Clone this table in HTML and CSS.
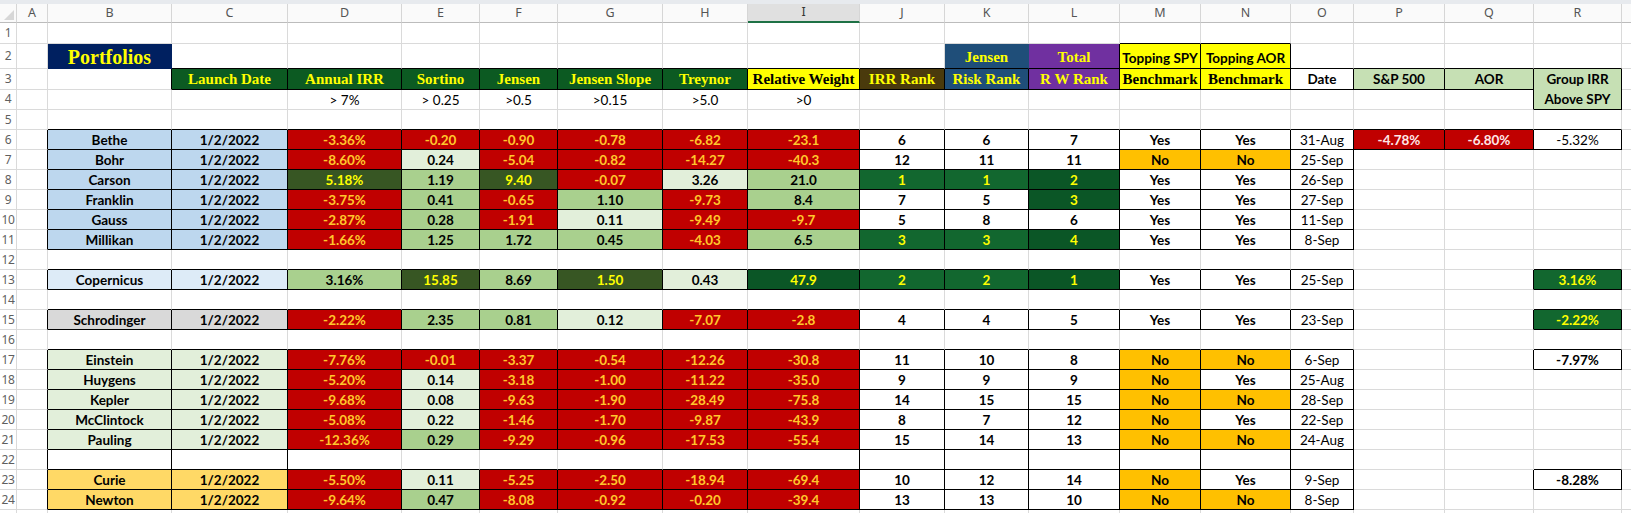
FILE: index.html
```html
<!DOCTYPE html>
<html>
<head>
<meta charset="utf-8">
<title>Portfolios</title>
<link rel="stylesheet" href="styles.css">
</head>
<body>
<div class="strip"></div>
<table class="sheet">
<colgroup>
<col class="c-rh"><col class="c-a"><col class="c-b"><col class="c-c"><col class="c-d"><col class="c-e"><col class="c-f"><col class="c-g"><col class="c-h"><col class="c-i"><col class="c-j"><col class="c-k"><col class="c-l"><col class="c-m"><col class="c-n"><col class="c-o"><col class="c-p"><col class="c-q"><col class="c-r"><col class="c-s">
</colgroup>
<tr class="hdr">
<th class="corner"></th><th>A</th><th>B</th><th>C</th><th>D</th><th>E</th><th>F</th><th>G</th><th>H</th><th class="sel">I</th><th>J</th><th>K</th><th>L</th><th>M</th><th>N</th><th>O</th><th>P</th><th>Q</th><th>R</th><th></th>
</tr>
<tr class="r1">
<th>1</th><td></td><td></td><td></td><td></td><td></td><td></td><td></td><td></td><td></td><td></td><td></td><td></td><td class="kb"></td><td class="kb"></td><td></td><td></td><td></td><td></td><td></td>
</tr>
<tr class="r2">
<th>2</th><td></td><td class="navy">Portfolios</td><td class="kb"></td><td class="kb"></td><td class="kb"></td><td class="kb"></td><td class="kb"></td><td class="kb"></td><td class="kb"></td><td class="kb"></td><td class="kb blue nr ser">Jensen</td><td class="k purple ser">Total</td><td class="k yel top">Topping SPY</td><td class="k yel top">Topping AOR</td><td class="kb"></td><td class="kb"></td><td class="kb"></td><td class="kb"></td><td></td>
</tr>
<tr>
<th>3</th><td></td><td class="kr"></td><td class="k hg ser">Launch Date</td><td class="k hg ser">Annual IRR</td><td class="k hg ser">Sortino</td><td class="k hg ser">Jensen</td><td class="k hg ser">Jensen Slope</td><td class="k hg ser">Treynor</td><td class="k yel ser dark">Relative Weight</td><td class="k brown ser">IRR Rank</td><td class="k blue ser">Risk Rank</td><td class="k purple ser">R W Rank</td><td class="k yel ser dark">Benchmark</td><td class="k yel ser dark">Benchmark</td><td class="k">Date</td><td class="k pg">S&amp;P 500</td><td class="k pg">AOR</td><td class="k pg two" rowspan="2">Group IRR<br>Above SPY</td><td></td>
</tr>
<tr>
<th>4</th><td></td><td></td><td></td><td class="reg">&gt; 7%</td><td class="reg">&gt; 0.25</td><td class="reg">&gt;0.5</td><td class="reg">&gt;0.15</td><td class="reg">&gt;5.0</td><td class="reg">&gt;0</td><td></td><td></td><td></td><td></td><td></td><td></td><td></td><td class="kr"></td><td></td>
</tr>
<tr>
<th>5</th><td></td><td class="kb"></td><td class="kb"></td><td class="kb"></td><td class="kb"></td><td class="kb"></td><td class="kb"></td><td class="kb"></td><td class="kb"></td><td class="kb"></td><td class="kb"></td><td class="kb"></td><td class="kb"></td><td class="kb"></td><td class="kb"></td><td class="kb"></td><td class="kb"></td><td class="kb"></td><td></td>
</tr>
<tr>
<th>6</th><td class="kr"></td><td class="k bl">Bethe</td><td class="k bl">1/2/2022</td><td class="k rd">-3.36%</td><td class="k rd">-0.20</td><td class="k rd">-0.90</td><td class="k rd">-0.78</td><td class="k rd">-6.82</td><td class="k rd">-23.1</td><td class="k">6</td><td class="k">6</td><td class="k">7</td><td class="k">Yes</td><td class="k">Yes</td><td class="k reg">31-Aug</td><td class="k pr">-4.78%</td><td class="k pr">-6.80%</td><td class="k reg">-5.32%</td><td></td>
</tr>
<tr>
<th>7</th><td class="kr"></td><td class="k bl">Bohr</td><td class="k bl">1/2/2022</td><td class="k rd">-8.60%</td><td class="k vl">0.24</td><td class="k rd">-5.04</td><td class="k rd">-0.82</td><td class="k rd">-14.27</td><td class="k rd">-40.3</td><td class="k">12</td><td class="k">11</td><td class="k">11</td><td class="k no">No</td><td class="k no">No</td><td class="k reg">25-Sep</td><td></td><td></td><td></td><td></td>
</tr>
<tr>
<th>8</th><td class="kr"></td><td class="k bl">Carson</td><td class="k bl">1/2/2022</td><td class="k dg">5.18%</td><td class="k lg">1.19</td><td class="k dg">9.40</td><td class="k rd">-0.07</td><td class="k vl">3.26</td><td class="k lg">21.0</td><td class="k gr">1</td><td class="k gr">1</td><td class="k gd">2</td><td class="k">Yes</td><td class="k">Yes</td><td class="k reg">26-Sep</td><td></td><td></td><td></td><td></td>
</tr>
<tr>
<th>9</th><td class="kr"></td><td class="k bl">Franklin</td><td class="k bl">1/2/2022</td><td class="k rd">-3.75%</td><td class="k lg">0.41</td><td class="k rd">-0.65</td><td class="k lg">1.10</td><td class="k rd">-9.73</td><td class="k lg">8.4</td><td class="k">7</td><td class="k">5</td><td class="k gd">3</td><td class="k">Yes</td><td class="k">Yes</td><td class="k reg">27-Sep</td><td></td><td></td><td></td><td></td>
</tr>
<tr>
<th>10</th><td class="kr"></td><td class="k bl">Gauss</td><td class="k bl">1/2/2022</td><td class="k rd">-2.87%</td><td class="k lg">0.28</td><td class="k rd">-1.91</td><td class="k vl">0.11</td><td class="k rd">-9.49</td><td class="k rd">-9.7</td><td class="k">5</td><td class="k">8</td><td class="k">6</td><td class="k">Yes</td><td class="k">Yes</td><td class="k reg">11-Sep</td><td></td><td></td><td></td><td></td>
</tr>
<tr>
<th>11</th><td class="kr"></td><td class="k bl">Millikan</td><td class="k bl">1/2/2022</td><td class="k rd">-1.66%</td><td class="k lg">1.25</td><td class="k lg">1.72</td><td class="k lg">0.45</td><td class="k rd">-4.03</td><td class="k lg">6.5</td><td class="k gr">3</td><td class="k gr">3</td><td class="k gd">4</td><td class="k">Yes</td><td class="k">Yes</td><td class="k reg">8-Sep</td><td></td><td></td><td></td><td></td>
</tr>
<tr>
<th>12</th><td></td><td class="kb"></td><td class="kb"></td><td class="kb"></td><td class="kb"></td><td class="kb"></td><td class="kb"></td><td class="kb"></td><td class="kb"></td><td class="kb"></td><td class="kb"></td><td class="kb"></td><td class="kb"></td><td class="kb"></td><td class="kb"></td><td></td><td></td><td class="kb"></td><td></td>
</tr>
<tr>
<th>13</th><td class="kr"></td><td class="k bl2">Copernicus</td><td class="k bl2">1/2/2022</td><td class="k lg">3.16%</td><td class="k dg">15.85</td><td class="k lg">8.69</td><td class="k dg">1.50</td><td class="k vl">0.43</td><td class="k gd">47.9</td><td class="k gr">2</td><td class="k gr">2</td><td class="k gd">1</td><td class="k">Yes</td><td class="k">Yes</td><td class="k reg">25-Sep</td><td></td><td class="kr"></td><td class="k gr">3.16%</td><td></td>
</tr>
<tr>
<th>14</th><td></td><td class="kb"></td><td class="kb"></td><td class="kb"></td><td class="kb"></td><td class="kb"></td><td class="kb"></td><td class="kb"></td><td class="kb"></td><td class="kb"></td><td class="kb"></td><td class="kb"></td><td class="kb"></td><td class="kb"></td><td class="kb"></td><td></td><td></td><td class="kb"></td><td></td>
</tr>
<tr>
<th>15</th><td class="kr"></td><td class="k gy">Schrodinger</td><td class="k gy">1/2/2022</td><td class="k rd">-2.22%</td><td class="k lg">2.35</td><td class="k lg">0.81</td><td class="k vl">0.12</td><td class="k rd">-7.07</td><td class="k rd">-2.8</td><td class="k">4</td><td class="k">4</td><td class="k">5</td><td class="k">Yes</td><td class="k">Yes</td><td class="k reg">23-Sep</td><td></td><td class="kr"></td><td class="k gr">-2.22%</td><td></td>
</tr>
<tr>
<th>16</th><td></td><td class="kb"></td><td class="kb"></td><td class="kb"></td><td class="kb"></td><td class="kb"></td><td class="kb"></td><td class="kb"></td><td class="kb"></td><td class="kb"></td><td class="kb"></td><td class="kb"></td><td class="kb"></td><td class="kb"></td><td class="kb"></td><td></td><td></td><td class="kb"></td><td></td>
</tr>
<tr>
<th>17</th><td class="kr"></td><td class="k eg">Einstein</td><td class="k eg">1/2/2022</td><td class="k rd">-7.76%</td><td class="k rd">-0.01</td><td class="k rd">-3.37</td><td class="k rd">-0.54</td><td class="k rd">-12.26</td><td class="k rd">-30.8</td><td class="k">11</td><td class="k">10</td><td class="k">8</td><td class="k no">No</td><td class="k no">No</td><td class="k reg">6-Sep</td><td></td><td class="kr"></td><td class="k">-7.97%</td><td></td>
</tr>
<tr>
<th>18</th><td class="kr"></td><td class="k eg">Huygens</td><td class="k eg">1/2/2022</td><td class="k rd">-5.20%</td><td class="k vl">0.14</td><td class="k rd">-3.18</td><td class="k rd">-1.00</td><td class="k rd">-11.22</td><td class="k rd">-35.0</td><td class="k">9</td><td class="k">9</td><td class="k">9</td><td class="k no">No</td><td class="k">Yes</td><td class="k reg">25-Aug</td><td></td><td></td><td></td><td></td>
</tr>
<tr>
<th>19</th><td class="kr"></td><td class="k eg">Kepler</td><td class="k eg">1/2/2022</td><td class="k rd">-9.68%</td><td class="k vl">0.08</td><td class="k rd">-9.63</td><td class="k rd">-1.90</td><td class="k rd">-28.49</td><td class="k rd">-75.8</td><td class="k">14</td><td class="k">15</td><td class="k">15</td><td class="k no">No</td><td class="k no">No</td><td class="k reg">28-Sep</td><td></td><td></td><td></td><td></td>
</tr>
<tr>
<th>20</th><td class="kr"></td><td class="k eg">McClintock</td><td class="k eg">1/2/2022</td><td class="k rd">-5.08%</td><td class="k vl">0.22</td><td class="k rd">-1.46</td><td class="k rd">-1.70</td><td class="k rd">-9.87</td><td class="k rd">-43.9</td><td class="k">8</td><td class="k">7</td><td class="k">12</td><td class="k no">No</td><td class="k">Yes</td><td class="k reg">22-Sep</td><td></td><td></td><td></td><td></td>
</tr>
<tr>
<th>21</th><td class="kr"></td><td class="k eg">Pauling</td><td class="k eg">1/2/2022</td><td class="k rd">-12.36%</td><td class="k lg">0.29</td><td class="k rd">-9.29</td><td class="k rd">-0.96</td><td class="k rd">-17.53</td><td class="k rd">-55.4</td><td class="k">15</td><td class="k">14</td><td class="k">13</td><td class="k no">No</td><td class="k no">No</td><td class="k reg">24-Aug</td><td></td><td></td><td></td><td></td>
</tr>
<tr>
<th>22</th><td class="kr"></td><td class="k"></td><td class="k"></td><td class="kb"></td><td class="kb"></td><td class="kb"></td><td class="kb"></td><td class="kb"></td><td class="k"></td><td class="k"></td><td class="k"></td><td class="k"></td><td class="k"></td><td class="k"></td><td class="k"></td><td></td><td></td><td class="kb"></td><td></td>
</tr>
<tr>
<th>23</th><td class="kr"></td><td class="k au">Curie</td><td class="k au">1/2/2022</td><td class="k rd">-5.50%</td><td class="k vl">0.11</td><td class="k rd">-5.25</td><td class="k rd">-2.50</td><td class="k rd">-18.94</td><td class="k rd">-69.4</td><td class="k">10</td><td class="k">12</td><td class="k">14</td><td class="k no">No</td><td class="k">Yes</td><td class="k reg">9-Sep</td><td></td><td class="kr"></td><td class="k">-8.28%</td><td></td>
</tr>
<tr>
<th>24</th><td class="kr"></td><td class="k au">Newton</td><td class="k au">1/2/2022</td><td class="k rd">-9.64%</td><td class="k lg">0.47</td><td class="k rd">-8.08</td><td class="k rd">-0.92</td><td class="k rd">-0.20</td><td class="k rd">-39.4</td><td class="k">13</td><td class="k">13</td><td class="k">10</td><td class="k no">No</td><td class="k no">No</td><td class="k reg">8-Sep</td><td></td><td></td><td></td><td></td>
</tr>
<tr>
<th></th><td></td><td></td><td></td><td></td><td></td><td></td><td></td><td></td><td></td><td></td><td></td><td></td><td></td><td></td><td></td><td></td><td></td><td></td><td></td>
</tr>
</table>
</body>
</html>
```
FILE: styles.css
```css
html, body {
  margin: 0;
  padding: 0;
  background: #ffffff;
  overflow: hidden;
}
body {
  width: 1631px;
  height: 513px;
}
.strip {
  height: 4px;
  background: #e7eaee;
}
.sheet {
  table-layout: fixed;
  border-collapse: separate;
  border-spacing: 0;
  width: 1652px;
}
.c-rh { width: 17px; }
.c-a { width: 31px; }
.c-b { width: 124px; }
.c-c { width: 116px; }
.c-d { width: 114px; }
.c-e { width: 78px; }
.c-f { width: 78px; }
.c-g { width: 105px; }
.c-h { width: 85px; }
.c-i { width: 112px; }
.c-j { width: 85px; }
.c-k { width: 84px; }
.c-l { width: 91px; }
.c-m { width: 81px; }
.c-n { width: 90px; }
.c-o { width: 63px; }
.c-p { width: 91px; }
.c-q { width: 89px; }
.c-r { width: 88px; }
.c-s { width: 30px; }

tr { height: 20px; }
tr.hdr { height: 19px; }
tr.r1 { height: 21px; }
tr.r2 { height: 25px; }

th, td {
  box-sizing: border-box;
  padding: 0;
  border-right: 1px solid #dadada;
  border-bottom: 1px solid #dadada;
  white-space: nowrap;
  overflow: hidden;
  text-align: center;
  vertical-align: middle;
}
th {
  font-family: "Noto Sans", "DejaVu Sans", sans-serif;
  font-weight: 400;
  font-size: 12px;
  color: #5f5f5f;
  background: #ffffff;
  line-height: 1;
  letter-spacing: -0.3px;
}
tr.hdr th {
  background: #fafafa;
  border-bottom-color: #bcbcbc;
  border-right-color: #d6d6d6;
  font-size: 12.5px;
  color: #555555;
  letter-spacing: 0;
}
tr.hdr th.sel {
  background: #e0e0e0;
  border-bottom: 2px solid #1e7145;
  color: #333333;
}
th.corner {
  position: relative;
}
th.corner::after {
  content: "";
  position: absolute;
  right: 2px;
  bottom: 2px;
  border-style: solid;
  border-width: 0 0 10px 10px;
  border-color: transparent transparent #d7d7d7 transparent;
}
td {
  font-family: Lato, "Liberation Sans", sans-serif;
  font-weight: 700;
  font-size: 13.5px;
  line-height: 1;
  color: #000000;
  background: #ffffff;
  padding-top: 2px;
}
td.reg { font-weight: 400; }

/* borders */
.k { border-right-color: #000000; border-bottom-color: #000000; }
.kr { border-right-color: #000000; }
.kb { border-bottom-color: #000000; }
.nr { border-right-color: transparent; }

/* header cells */
.ser {
  font-family: "Liberation Serif", "Times New Roman", serif;
  font-weight: 700;
  font-size: 15px;
  color: #ffff00;
}
.ser.dark { color: #000000; }
.navy {
  background: #002060;
  border-color: transparent;
  font-family: "Liberation Serif", "Times New Roman", serif;
  font-size: 20px;
  color: #ffff00;
  vertical-align: bottom;
  padding: 0 0 2px;
}
.r2 td { vertical-align: bottom; padding-bottom: 3px; }
.r2 td.navy { padding-bottom: 1px; }
.hg { background: #0c5a22; }
.yel { background: #ffff00; }
.brown { background: #4a3a0c; }
.blue { background: #1f4e79; }
.purple { background: #7030a0; }
.pg { background: #c6e0b4; }
.two { line-height: 20px; padding-top: 0; }

/* name groups */
.bl { background: #bdd7ee; }
.bl2 { background: #ddebf7; }
.gy { background: #d9d9d9; }
.eg { background: #e2efda; }
.au { background: #ffd966; }

/* value fills */
.rd { background: #c00000; color: #ffc72c; }
.pr { background: #c00000; color: #ffe6e6; }
.dg { background: #375623; color: #ffff00; }
.lg { background: #a9d08e; }
.vl { background: #e2efda; }
.gr { background: #12672f; color: #ffff00; }
.gd { background: #0b5626; color: #ffff00; }
.no { background: #ffc000; }
```
